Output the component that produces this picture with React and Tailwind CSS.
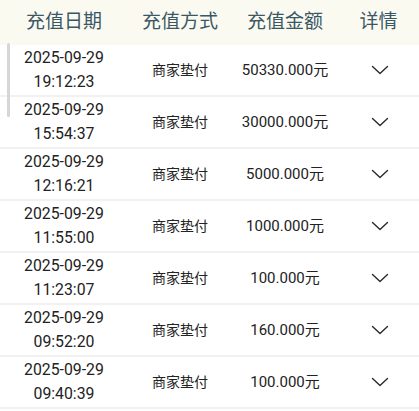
import React from "react";

const records = [
  { date: "2025-09-29", time: "19:12:23", amount: "50330.000元" },
  { date: "2025-09-29", time: "15:54:37", amount: "30000.000元" },
  { date: "2025-09-29", time: "12:16:21", amount: "5000.000元" },
  { date: "2025-09-29", time: "11:55:00", amount: "1000.000元" },
  { date: "2025-09-29", time: "11:23:07", amount: "100.000元" },
  { date: "2025-09-29", time: "09:52:20", amount: "160.000元" },
  { date: "2025-09-29", time: "09:40:39", amount: "100.000元" },
];

const cols = "grid grid-cols-[128px_104px_106px_1fr] items-center text-center";

const Chevron = () => (
  <svg width="18" height="10" viewBox="0 0 18 10" fill="none">
    <polyline points="1.5,1.5 9,8.5 16.5,1.5" stroke="#2a2a2a" strokeWidth="1.4" strokeLinecap="round" strokeLinejoin="round" />
  </svg>
);

export default function App() {
  return (
    <div
      className="relative w-[419px] h-[411px] overflow-hidden bg-white"
      style={{ fontFamily: "Roboto, 'Noto Sans CJK SC', sans-serif" }}
    >
      {/* header */}
      <div className={`${cols} h-[45px] bg-[#fbfaf1] text-[19px] text-[#3a5766]`}>
        <span>充值日期</span>
        <span>充值方式</span>
        <span>充值金额</span>
        <span>详情</span>
      </div>

      {/* rows */}
      <div className="flex flex-col">
        {records.map((r, i) => (
          <div key={i} className={`${cols} h-[52px] border-b-2 border-[#f1f1f1] text-[#222]`}>
            <div className="flex flex-col text-[15.8px] leading-[24px]">
              <span>{r.date}</span>
              <span>{r.time}</span>
            </div>
            <span className="text-[14px]">商家垫付</span>
            <span className="text-[15px]">{r.amount}</span>
            <div className="flex justify-center pl-[2px]">
              <Chevron />
            </div>
          </div>
        ))}
      </div>

      {/* scrollbar */}
      <div className="absolute left-[7px] top-[43px] w-[3px] h-[74px] rounded-full bg-[#d6d6d6]" />
    </div>
  );
}
